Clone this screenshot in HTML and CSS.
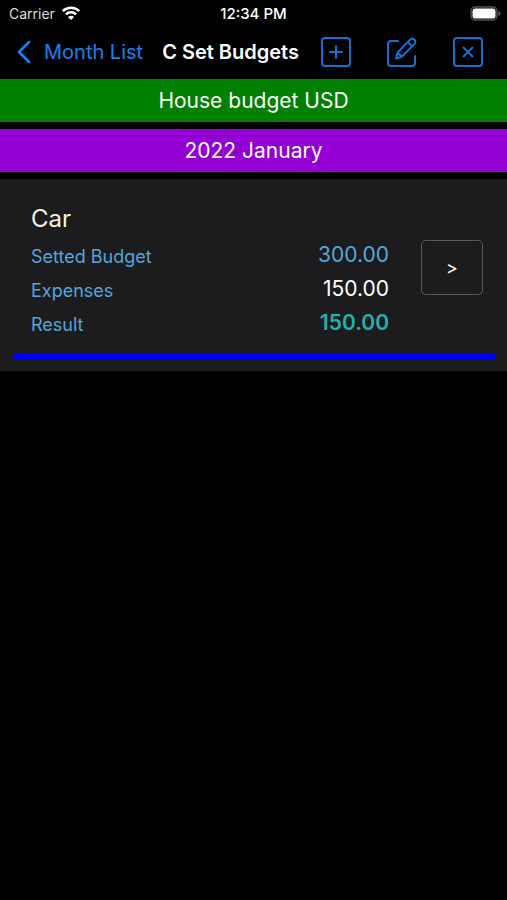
FILE: index.html
```html
<!DOCTYPE html>
<html lang="en">
<head>
    <meta charset="UTF-8">
    <meta name="viewport" content="width=device-width, initial-scale=1.0">
    <title>C Set Budgets</title>
    <link rel="stylesheet" href="styles.css">
</head>
<body>

    <div class="status-bar">
        <div class="carrier">
            <span>Carrier</span>
            <svg width="20" height="14" viewBox="0 0 20 14" fill="none" stroke="#fff" stroke-width="2.4" aria-hidden="true">
                <path d="M1.8 5.2a11.6 11.6 0 0 1 16.4 0"/>
                <path d="M4.9 8.4a7.2 7.2 0 0 1 10.2 0"/>
                <path d="M10 14l-3-3.1a4.2 4.2 0 0 1 6 0z" fill="#fff" stroke="none"/>
            </svg>
        </div>
        <span class="clock">12:34 PM</span>
        <svg class="battery" width="31" height="15" viewBox="0 0 31 15" aria-hidden="true">
            <rect x="1" y="1" width="26" height="13" rx="4" fill="none" stroke="#555" stroke-width="1.4"/>
            <rect x="2.5" y="2.5" width="23" height="10" rx="2.5" fill="#fff"/>
            <path d="M28.5 5v5c1.2-.4 2-1.4 2-2.5s-.8-2.1-2-2.5z" fill="#666"/>
        </svg>
    </div>

    <header class="nav-bar">
        <a class="back" href="#">
            <svg width="16" height="26" viewBox="0 0 16 26" fill="none" stroke="currentColor" stroke-width="2.8" stroke-linecap="round" stroke-linejoin="round" aria-hidden="true">
                <path d="M13 3L3 13l10 10"/>
            </svg>
            <span>Month List</span>
        </a>
        <h1>C Set Budgets</h1>
        <div class="actions">
            <button type="button" aria-label="Add">
                <svg width="32" height="32" viewBox="0 0 32 32" aria-hidden="true">
                    <rect x="2" y="2" width="28" height="28" rx="3"/>
                    <path d="M16 10v12M10 16h12"/>
                </svg>
            </button>
            <button type="button" aria-label="Edit">
                <svg width="32" height="32" viewBox="0 0 32 32" aria-hidden="true">
                    <path d="M12 5H5a3 3 0 0 0-3 3v19a3 3 0 0 0 3 3h21a3 3 0 0 0 3-3v-7"/>
                    <path d="M10 22.500l1.500-6L24.200 3.600a3 3 0 0 1 4.300 0 3 3 0 0 1 0 4.300L15.700 20.700zM11.500 16.500l4.200 4.200M21.800 6l4.300 4.300"/>
                </svg>
            </button>
            <button type="button" aria-label="Close">
                <svg width="32" height="32" viewBox="0 0 32 32" aria-hidden="true">
                    <rect x="2" y="2" width="28" height="28" rx="3"/>
                    <path d="M11.500 11.500l9 9M20.500 11.500l-9 9"/>
                </svg>
            </button>
        </div>
    </header>

    <main>
        <div class="banner banner-budget">House budget USD</div>
        <div class="banner banner-month">2022 January</div>

        <section class="category">
            <h2>Car</h2>
            <div class="category-body">
                <table>
                    <tr class="budget">
                        <th scope="row">Setted Budget</th>
                        <td>300.00</td>
                    </tr>
                    <tr>
                        <th scope="row">Expenses</th>
                        <td>150.00</td>
                    </tr>
                    <tr class="result">
                        <th scope="row">Result</th>
                        <td>150.00</td>
                    </tr>
                </table>
                <button class="open" type="button" aria-label="Open Car">&gt;</button>
            </div>
            <div class="bar"></div>
        </section>
    </main>

</body>
</html>
```

FILE: styles.css
```css
* {
    box-sizing: border-box;
}

body {
    margin: 0;
    background-color: #000;
    color: #fff;
    font-family: Inter, "Liberation Sans", sans-serif;
}

button {
    background: none;
    font-family: inherit;
    cursor: pointer;
}

svg {
    display: block;
}

.status-bar {
    display: grid;
    grid-template-columns: 1fr auto 1fr;
    align-items: center;
    height: 26px;
    padding: 0 6px;
    font-size: 14px;
}

.carrier {
    display: flex;
    align-items: center;
    gap: 6px;
    padding-left: 3px;
    color: #ddd;
}

.clock {
    font-size: 15px;
    font-weight: 500;
}

.battery {
    justify-self: end;
}

.nav-bar {
    display: flex;
    align-items: center;
    height: 53px;
    padding: 0 23px 1px 16px;
}

.back {
    display: flex;
    align-items: center;
    gap: 12px;
    color: #1482ee;
    font-size: 20px;
    text-decoration: none;
    white-space: nowrap;
}

.nav-bar h1 {
    margin: 0 0 0 19px;
    font-size: 20px;
    font-weight: 600;
    white-space: nowrap;
}

.actions {
    display: flex;
    gap: 34px;
    margin-left: auto;
}

.actions button {
    padding: 0;
    border: 0;
    color: #1471cf;
}

.actions svg {
    fill: none;
    stroke: currentColor;
    stroke-width: 2;
    stroke-linecap: round;
    stroke-linejoin: round;
}

.banner {
    margin-bottom: 7px;
    font-size: 21px;
    line-height: 43px;
    text-align: center;
}

.banner-budget {
    background-color: #008000;
}

.banner-month {
    background-color: #9400d3;
}

.category {
    padding: 24px 12px 12px 13px;
    background-color: #1c1c1e;
}

.category h2 {
    margin: 0 0 5px;
    padding-left: 18px;
    color: #f5f5dc;
    font-size: 24px;
    font-weight: 400;
    line-height: 32px;
}

.category-body {
    display: flex;
    align-items: flex-start;
    gap: 32px;
    padding: 0 12px 0 18px;
}

.category table {
    flex: 1;
    border-collapse: collapse;
}

.category th,
.category td {
    padding: 0;
}

.category th {
    color: #56a5dc;
    font-size: 18px;
    font-weight: 400;
    line-height: 34px;
    text-align: left;
}

.category td {
    font-size: 21px;
    line-height: 30px;
    text-align: right;
    vertical-align: top;
}

.category .budget td {
    color: #56a5dc;
}

.category .result td {
    color: #20b2aa;
    font-weight: 600;
}

.open {
    width: 62px;
    height: 55px;
    border: 1px solid #5a5a5c;
    border-radius: 5px;
    color: #fff;
    font-size: 18px;
}

.bar {
    height: 6px;
    margin-top: 11px;
    background-color: #0000ff;
}
```
